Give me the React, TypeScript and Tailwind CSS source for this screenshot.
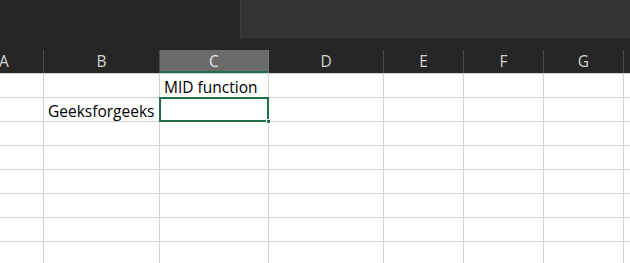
const cols = [
  { key: 'A', w: 'w-[79px] -ml-[35px]' },
  { key: 'B', w: 'w-[116px]' },
  { key: 'C', w: 'w-[109px]' },
  { key: 'D', w: 'w-[115px]' },
  { key: 'E', w: 'w-[80px]' },
  { key: 'F', w: 'w-[80px]' },
  { key: 'G', w: 'w-[80px]' },
  { key: 'H', w: 'w-[80px]' },
]

const font = { fontFamily: '"Open Sans", "Liberation Sans", sans-serif' }

function Cell({ col, row }: { col: string; row: number }) {
  const selected = col === 'C' && row === 2
  let text = ''
  if (col === 'C' && row === 1) text = 'MID function'
  if (col === 'B' && row === 2) text = 'Geeksforgeeks'
  return (
    <div className="relative h-full flex items-end pl-[4px] pb-[2px] text-[15.5px] leading-none text-black whitespace-nowrap">
      {text}
      {selected && (
        <>
          <div className="absolute -left-px -top-px right-[-1px] bottom-[-1px] border-2 border-[#21704a]" />
          <div className="absolute right-[-3px] bottom-[-3px] w-[5px] h-[5px] bg-[#21704a] border border-white" />
        </>
      )}
    </div>
  )
}

export default function App() {
  const rows = [1, 2, 3, 4, 5, 6, 7, 8]
  return (
    <div className="w-[630px] h-[263px] overflow-hidden bg-white" style={font}>
      {/* ribbon strip */}
      <div className="h-[50px] bg-[#262626] flex flex-col">
        <div className="h-[38px] flex">
          <div className="w-[240px]" />
          <div className="flex-1 bg-[#343434] border-l border-b border-[#3c3c3c]" />
        </div>
      </div>

      {/* column headers */}
      <div className="flex h-[24px] bg-[#262626] border-b border-[#cfcfcf]">
        {cols.map(c => (
          <div
            key={c.key}
            className={`${c.w} shrink-0 flex items-center justify-center text-[15.5px] pt-[1px] border-r ${
              c.key === 'C'
                ? 'bg-[#6b6b6b] text-[#e6e6e6] border-[#7a7a7a] shadow-[inset_0_-2px_0_#21704a]'
                : 'text-[#d4d4d4] border-[#4a4a4a]'
            }`}
          >
            {c.key === 'H' ? '' : c.key}
          </div>
        ))}
      </div>

      {/* grid */}
      {rows.map(r => (
        <div key={r} className="flex h-[24px] border-b border-[#d4d4d4]">
          {cols.map(c => (
            <div key={c.key} className={`${c.w} shrink-0 border-r border-[#d4d4d4]`}>
              <Cell col={c.key} row={r} />
            </div>
          ))}
        </div>
      ))}
    </div>
  )
}
